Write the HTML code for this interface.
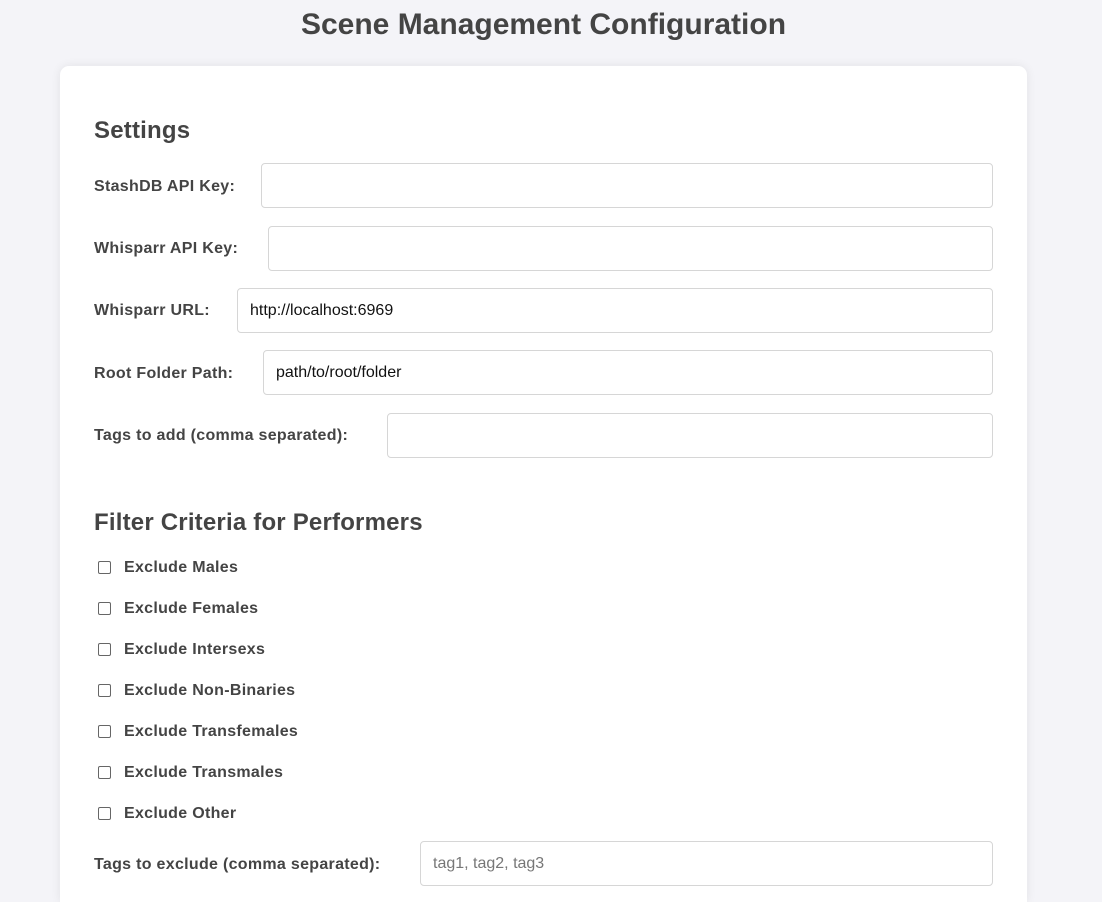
<!DOCTYPE html>
<html><head><meta charset="utf-8"><style>
html,body{margin:0;height:902px;overflow:hidden}
body{background:#f4f4f8;font-family:"Liberation Sans",sans-serif;color:#444;width:1102px;position:relative}
h1{position:absolute;left:0;top:5px;width:1087px;text-align:center;margin:0;font-size:30px;line-height:40px;font-weight:bold}
.card{position:absolute;left:60px;top:66px;width:967px;height:836px;background:#fff;border-radius:9px 9px 0 0;box-shadow:0 0 10px rgba(0,0,0,0.08)}
h2{position:absolute;margin:0;font-size:24px;line-height:30px;font-weight:bold;letter-spacing:0.2px}
.l{position:absolute;left:94px;font-size:16px;font-weight:bold;line-height:20px;letter-spacing:0.3px}
.i{position:absolute;height:43px;border:1px solid #d6d6d6;border-radius:4px;font-size:16px;line-height:43px;padding-left:12px;color:#111}
.cb{position:absolute;left:98px;width:11px;height:11px;border:1px solid #666;border-radius:2px;background:#fff}
.cl{position:absolute;left:124px;font-size:16px;font-weight:bold;line-height:20px;letter-spacing:0.3px}
</style></head><body>
<h1>Scene Management Configuration</h1>
<div class="card"></div>
<h2 style="left:94px;top:116px">Settings</h2>
<div class="l" style="top:177px">StashDB API Key:</div>
<div class="i" style="left:261px;top:163px;width:718px"></div>
<div class="l" style="top:239px">Whisparr API Key:</div>
<div class="i" style="left:268px;top:226px;width:711px"></div>
<div class="l" style="top:301px">Whisparr URL:</div>
<div class="i" style="left:237px;top:288px;width:742px">http://localhost:6969</div>
<div class="l" style="top:364px">Root Folder Path:</div>
<div class="i" style="left:263px;top:350px;width:716px">path/to/root/folder</div>
<div class="l" style="top:426px">Tags to add (comma separated):</div>
<div class="i" style="left:387px;top:413px;width:592px"></div>
<h2 style="left:94px;top:508px">Filter Criteria for Performers</h2>
<div class="cb" style="top:561px"></div><div class="cl" style="top:558px">Exclude Males</div>
<div class="cb" style="top:602px"></div><div class="cl" style="top:599px">Exclude Females</div>
<div class="cb" style="top:643px"></div><div class="cl" style="top:640px">Exclude Intersexs</div>
<div class="cb" style="top:684px"></div><div class="cl" style="top:681px">Exclude Non-Binaries</div>
<div class="cb" style="top:725px"></div><div class="cl" style="top:722px">Exclude Transfemales</div>
<div class="cb" style="top:766px"></div><div class="cl" style="top:763px">Exclude Transmales</div>
<div class="cb" style="top:807px"></div><div class="cl" style="top:804px">Exclude Other</div>
<div class="l" style="top:855px">Tags to exclude (comma separated):</div>
<div class="i" style="left:420px;top:841px;width:559px;color:#777">tag1, tag2, tag3</div>
</body></html>
